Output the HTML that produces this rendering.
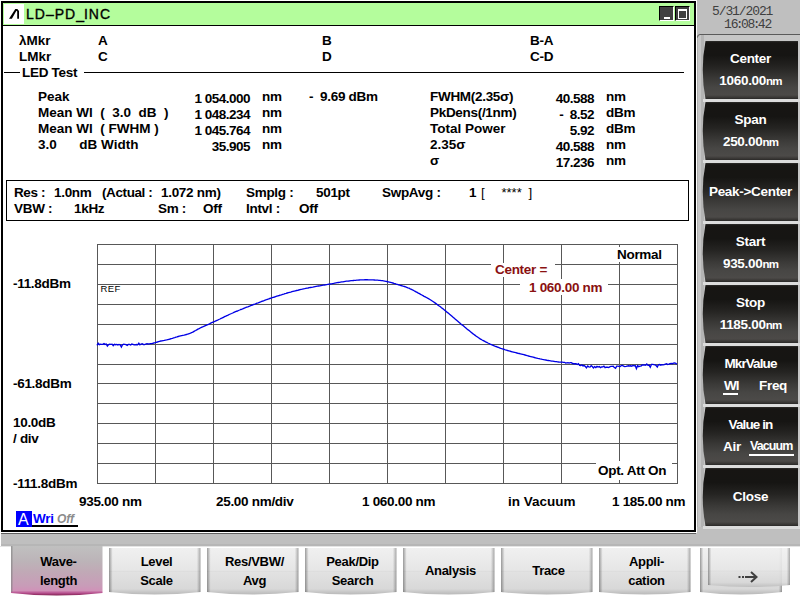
<!DOCTYPE html>
<html><head><meta charset="utf-8">
<style>
*{margin:0;padding:0;box-sizing:border-box}
html,body{width:800px;height:600px;overflow:hidden;background:#fff}
body{position:relative;font-family:"Liberation Sans",sans-serif;font-weight:bold;font-size:13.5px;color:#000}
.a{position:absolute}
.t{position:absolute;white-space:pre;line-height:13px;letter-spacing:-0.3px}
.z{letter-spacing:0}
#win{left:1px;top:1px;width:695px;height:531px;border:2px solid #000;background:#fff}
#title{left:3px;top:3px;width:691px;height:23px;background:#b4fd9c;border-bottom:1px solid #000}
#panel{left:696px;top:0;width:104px;height:547px;background:#bfbfbf}
#strip{left:0;top:532px;width:800px;height:15px;background:#bfbfbf}
.rb{position:absolute;left:703px;width:95px;height:58px;color:#fff;text-align:center;
 background:linear-gradient(#2a2a2a 0%,#151515 12%,#1b1b1b 40%,#444 70%,#5c5b58 82%,#3a3a3a 100%)}
.rb .l{position:absolute;left:0;width:95px;text-align:center;line-height:13px;white-space:pre}
.bb{position:absolute;top:548px;width:92px;height:47px;text-align:center;
 background:linear-gradient(#ececec 0%,#e4e4e4 48%,#d8d8d8 50%,#dcdcdc 90%,#c8c8c8 100%);border-radius:0 0 6px 6px}
.bb .l{position:absolute;left:0;width:92px;text-align:center;line-height:13px;white-space:pre}
.g{position:absolute;background:#505050}
.red{color:#8a1111}
.n{letter-spacing:-0.5px}
.rl{left:703px;width:95px;text-align:center;color:#fff}
.bl{width:92px;text-align:center;font-size:13px}
</style></head><body>
<div id="win" class="a"></div>
<div id="title" class="a"></div>
<div class="a" style="left:4px;top:4px;width:20px;height:20px;background:#fff"></div>
<svg class="a" style="left:0;top:0" width="40" height="30"><path d="M9 18.8 L15.3 9 L17.3 9 L19 11 L19 18.8 L17.2 18.8 L17.2 11.6 L16.4 10.8 L11.9 18.8 Z" fill="#000"/></svg>
<div class="t" style="left:26px;top:7px;font-size:14px;font-weight:normal;line-height:14px;letter-spacing:1.0px;-webkit-text-stroke:0.35px #000">LD–PD<span style="letter-spacing:0">_</span>INC</div>
<!-- min/max -->
<div class="a" style="left:659px;top:6px;width:15px;height:15px;background:#404040;border-top:1px solid #000;border-left:1px solid #000;border-right:1px solid #fff;border-bottom:1px solid #fff"></div>
<div class="a" style="left:664px;top:17px;width:6px;height:2px;background:#fff"></div>
<div class="a" style="left:675px;top:6px;width:15px;height:15px;background:#404040;border-top:1px solid #000;border-left:1px solid #000;border-right:1px solid #fff;border-bottom:1px solid #fff"></div>
<div class="a" style="left:678px;top:9px;width:9px;height:10px;border:solid #fff;border-width:2px 1px 1px 1px"></div>

<!-- marker header -->
<div class="t z" style="left:19px;top:34px">λMkr</div>
<div class="t" style="left:98px;top:34px">A</div>
<div class="t" style="left:322px;top:34px">B</div>
<div class="t" style="left:530px;top:34px">B-A</div>
<div class="t z" style="left:19px;top:50px">LMkr</div>
<div class="t" style="left:98px;top:50px">C</div>
<div class="t" style="left:322px;top:50px">D</div>
<div class="t" style="left:530px;top:50px">C-D</div>
<div class="a" style="left:4px;top:72px;width:16px;height:1px;background:#000"></div>
<div class="t" style="left:22px;top:66px">LED Test</div>
<div class="a" style="left:84px;top:72px;width:600px;height:1px;background:#000"></div>

<!-- results -->
<div class="t z" style="left:38px;top:90px">Peak</div>
<div class="t z" style="left:38px;top:106px">Mean Wl  (  3.0  dB  )</div>
<div class="t z" style="left:38px;top:122px">Mean Wl  ( FWHM )</div>
<div class="t z" style="left:38px;top:138px">3.0      dB Width</div>
<div class="t n" style="left:150px;top:92px;width:100px;text-align:right">1 054.000</div>
<div class="t n" style="left:150px;top:108px;width:100px;text-align:right">1 048.234</div>
<div class="t n" style="left:150px;top:124px;width:100px;text-align:right">1 045.764</div>
<div class="t n" style="left:150px;top:140px;width:100px;text-align:right">35.905</div>
<div class="t" style="left:262px;top:90px">nm</div>
<div class="t" style="left:262px;top:106px">nm</div>
<div class="t" style="left:262px;top:122px">nm</div>
<div class="t" style="left:262px;top:138px">nm</div>
<div class="t" style="left:309px;top:90px">-  9.69 dBm</div>

<div class="t" style="left:430px;top:90px;letter-spacing:-0.3px">FWHM(2.35σ)</div>
<div class="t" style="left:430px;top:106px;letter-spacing:-0.3px">PkDens(/1nm)</div>
<div class="t z" style="left:430px;top:122px">Total Power</div>
<div class="t z" style="left:430px;top:138px">2.35σ</div>
<div class="t z" style="left:430px;top:154px">σ</div>
<div class="t n" style="left:494px;top:92px;width:100px;text-align:right">40.588</div>
<div class="t n" style="left:494px;top:108px;width:100px;text-align:right">-  8.52</div>
<div class="t n" style="left:494px;top:124px;width:100px;text-align:right">5.92</div>
<div class="t n" style="left:494px;top:140px;width:100px;text-align:right">40.588</div>
<div class="t n" style="left:494px;top:156px;width:100px;text-align:right">17.236</div>
<div class="t" style="left:606px;top:90px">nm</div>
<div class="t" style="left:606px;top:106px">dBm</div>
<div class="t" style="left:606px;top:122px">dBm</div>
<div class="t" style="left:606px;top:138px">nm</div>
<div class="t" style="left:606px;top:154px">nm</div>

<!-- info box -->
<div class="a" style="left:6px;top:180px;width:683px;height:41px;border:1px solid #000"></div>
<div class="t" style="left:14px;top:186px;letter-spacing:-0.4px">Res :</div>
<div class="t" style="left:54px;top:186px;letter-spacing:-0.3px">1.0nm</div>
<div class="t" style="left:102px;top:186px;letter-spacing:-0.4px">(Actual :</div>
<div class="t" style="left:161px;top:186px;letter-spacing:-0.3px">1.072 nm)</div>
<div class="t" style="left:246px;top:186px">Smplg :</div>
<div class="t" style="left:316px;top:186px">501pt</div>
<div class="t" style="left:382px;top:186px">SwpAvg :</div>
<div class="t" style="left:469px;top:186px">1</div><div class="t" style="left:481px;top:186px;font-weight:normal">[</div>
<div class="t" style="left:501.5px;top:186px;font-size:13px;font-weight:normal;letter-spacing:0">****</div>
<div class="t" style="left:528.5px;top:186px;font-weight:normal">]</div>
<div class="t" style="left:14px;top:202px;letter-spacing:-0.3px">VBW :</div>
<div class="t" style="left:74px;top:202px">1kHz</div>
<div class="t" style="left:158px;top:202px">Sm :</div>
<div class="t" style="left:203px;top:202px">Off</div>
<div class="t" style="left:246px;top:202px">Intvl :</div>
<div class="t" style="left:299px;top:202px">Off</div>

<!-- graph -->
<div id="grid" class="a" style="left:97px;top:244px;width:581px;height:240px"></div>
<svg class="a" style="left:0;top:0" width="800" height="600" id="gsvg">
<g stroke="#585858" stroke-width="1" shape-rendering="crispEdges"><line x1="97.5" y1="244" x2="97.5" y2="484" /><line x1="155.5" y1="244" x2="155.5" y2="484" /><line x1="213.5" y1="244" x2="213.5" y2="484" /><line x1="271.5" y1="244" x2="271.5" y2="484" /><line x1="329.5" y1="244" x2="329.5" y2="484" /><line x1="387.5" y1="244" x2="387.5" y2="484" /><line x1="445.5" y1="244" x2="445.5" y2="484" /><line x1="503.5" y1="244" x2="503.5" y2="484" /><line x1="561.5" y1="244" x2="561.5" y2="484" /><line x1="619.5" y1="244" x2="619.5" y2="484" /><line x1="677.5" y1="244" x2="677.5" y2="484" /><line x1="97" y1="244.5" x2="678" y2="244.5" /><line x1="97" y1="264.5" x2="678" y2="264.5" /><line x1="97" y1="284.5" x2="678" y2="284.5" /><line x1="97" y1="304.5" x2="678" y2="304.5" /><line x1="97" y1="324.5" x2="678" y2="324.5" /><line x1="97" y1="344.5" x2="678" y2="344.5" /><line x1="97" y1="364.5" x2="678" y2="364.5" /><line x1="97" y1="383.5" x2="678" y2="383.5" /><line x1="97" y1="403.5" x2="678" y2="403.5" /><line x1="97" y1="423.5" x2="678" y2="423.5" /><line x1="97" y1="443.5" x2="678" y2="443.5" /><line x1="97" y1="463.5" x2="678" y2="463.5" /><line x1="97" y1="483.5" x2="678" y2="483.5" /></g>
<path d="M97.0 345.4 L98.2 343.3 L99.3 344.7 L100.5 344.2 L101.6 344.3 L102.8 344.4 L104.0 343.6 L105.1 344.4 L106.3 344.1 L107.4 346.0 L108.6 344.6 L109.8 344.3 L110.9 344.4 L112.1 344.2 L113.2 345.6 L114.4 344.3 L115.6 344.7 L116.7 344.4 L117.9 344.9 L119.0 344.4 L120.2 344.9 L121.4 347.0 L122.5 344.7 L123.7 344.3 L124.8 344.4 L126.0 344.7 L127.2 345.4 L128.3 344.4 L129.5 344.4 L130.6 345.0 L131.8 344.1 L133.0 344.4 L134.1 344.9 L135.3 344.8 L136.4 344.5 L137.6 344.8 L138.8 343.2 L139.9 344.9 L141.1 344.0 L142.2 343.7 L143.4 344.5 L144.6 344.6 L145.7 344.0 L146.9 343.6 L148.0 344.0 L149.2 343.8 L150.4 343.7 L151.5 343.6 L152.7 343.3 L153.8 343.0 L155.0 342.7 L156.2 342.3 L157.3 342.0 L158.5 341.6 L159.6 341.3 L160.8 341.0 L162.0 340.8 L163.1 340.6 L164.3 340.4 L165.4 340.1 L166.6 339.9 L167.8 339.6 L168.9 339.3 L170.1 339.0 L171.2 338.6 L172.4 338.3 L173.6 337.9 L174.7 337.6 L175.9 337.2 L177.0 336.9 L178.2 336.5 L179.4 336.2 L180.5 335.9 L181.7 335.6 L182.8 335.3 L184.0 335.1 L185.2 334.8 L186.3 334.5 L187.5 334.2 L188.6 333.8 L189.8 333.4 L191.0 332.9 L192.1 332.4 L193.3 331.8 L194.4 331.1 L195.6 330.5 L196.8 329.8 L197.9 329.2 L199.1 328.6 L200.2 328.0 L201.4 327.4 L202.6 326.9 L203.7 326.4 L204.9 325.8 L206.0 325.3 L207.2 324.8 L208.4 324.3 L209.5 323.8 L210.7 323.2 L211.8 322.7 L213.0 322.2 L214.2 321.7 L215.3 321.2 L216.5 320.6 L217.6 320.1 L218.8 319.5 L220.0 319.0 L221.1 318.4 L222.3 317.9 L223.4 317.3 L224.6 316.7 L225.8 316.2 L226.9 315.6 L228.1 315.1 L229.2 314.5 L230.4 314.0 L231.6 313.5 L232.7 313.0 L233.9 312.4 L235.0 311.9 L236.2 311.4 L237.4 311.0 L238.5 310.5 L239.7 310.0 L240.8 309.5 L242.0 309.1 L243.2 308.6 L244.3 308.1 L245.5 307.7 L246.6 307.2 L247.8 306.8 L249.0 306.3 L250.1 305.9 L251.3 305.4 L252.4 305.0 L253.6 304.5 L254.8 304.1 L255.9 303.7 L257.1 303.2 L258.2 302.8 L259.4 302.3 L260.6 301.9 L261.7 301.4 L262.9 301.0 L264.0 300.6 L265.2 300.1 L266.4 299.7 L267.5 299.3 L268.7 298.9 L269.8 298.5 L271.0 298.1 L272.2 297.7 L273.3 297.3 L274.5 297.0 L275.6 296.6 L276.8 296.2 L278.0 295.8 L279.1 295.5 L280.3 295.1 L281.4 294.8 L282.6 294.4 L283.8 294.1 L284.9 293.7 L286.1 293.4 L287.2 293.0 L288.4 292.7 L289.6 292.4 L290.7 292.1 L291.9 291.7 L293.0 291.4 L294.2 291.1 L295.4 290.8 L296.5 290.5 L297.7 290.3 L298.8 290.0 L300.0 289.7 L301.2 289.4 L302.3 289.2 L303.5 288.9 L304.6 288.7 L305.8 288.4 L307.0 288.2 L308.1 288.0 L309.3 287.7 L310.4 287.5 L311.6 287.3 L312.8 287.1 L313.9 286.8 L315.1 286.6 L316.2 286.4 L317.4 286.2 L318.6 286.0 L319.7 285.8 L320.9 285.6 L322.0 285.4 L323.2 285.2 L324.4 285.0 L325.5 284.8 L326.7 284.6 L327.8 284.4 L329.0 284.2 L330.2 284.0 L331.3 283.8 L332.5 283.6 L333.6 283.4 L334.8 283.1 L336.0 282.9 L337.1 282.7 L338.3 282.5 L339.4 282.3 L340.6 282.1 L341.8 281.9 L342.9 281.8 L344.1 281.6 L345.2 281.4 L346.4 281.2 L347.6 281.1 L348.7 281.0 L349.9 280.8 L351.0 280.7 L352.2 280.6 L353.4 280.5 L354.5 280.4 L355.7 280.3 L356.8 280.2 L358.0 280.1 L359.2 280.0 L360.3 279.9 L361.5 279.9 L362.6 279.8 L363.8 279.8 L365.0 279.7 L366.1 279.7 L367.3 279.7 L368.4 279.8 L369.6 279.8 L370.8 279.8 L371.9 279.9 L373.1 279.9 L374.2 280.0 L375.4 280.1 L376.6 280.1 L377.7 280.2 L378.9 280.3 L380.0 280.4 L381.2 280.6 L382.4 280.7 L383.5 280.9 L384.7 281.1 L385.8 281.3 L387.0 281.5 L388.2 281.8 L389.3 282.1 L390.5 282.4 L391.6 282.7 L392.8 283.0 L394.0 283.4 L395.1 283.7 L396.3 284.1 L397.4 284.4 L398.6 284.8 L399.8 285.2 L400.9 285.5 L402.1 285.8 L403.2 286.2 L404.4 286.5 L405.6 286.9 L406.7 287.3 L407.9 287.8 L409.0 288.2 L410.2 288.8 L411.4 289.3 L412.5 289.9 L413.7 290.5 L414.8 291.2 L416.0 291.8 L417.2 292.4 L418.3 293.1 L419.5 293.7 L420.6 294.4 L421.8 295.0 L423.0 295.6 L424.1 296.3 L425.3 296.9 L426.4 297.5 L427.6 298.2 L428.8 298.8 L429.9 299.5 L431.1 300.3 L432.2 301.0 L433.4 301.8 L434.6 302.6 L435.7 303.4 L436.9 304.3 L438.0 305.1 L439.2 306.0 L440.4 306.8 L441.5 307.7 L442.7 308.6 L443.8 309.5 L445.0 310.4 L446.2 311.4 L447.3 312.4 L448.5 313.3 L449.6 314.3 L450.8 315.3 L452.0 316.3 L453.1 317.3 L454.3 318.3 L455.4 319.3 L456.6 320.3 L457.8 321.3 L458.9 322.2 L460.1 323.2 L461.2 324.2 L462.4 325.1 L463.6 326.1 L464.7 327.0 L465.9 327.9 L467.0 328.9 L468.2 329.9 L469.4 330.8 L470.5 331.7 L471.7 332.7 L472.8 333.6 L474.0 334.5 L475.2 335.4 L476.3 336.2 L477.5 337.0 L478.6 337.8 L479.8 338.6 L481.0 339.3 L482.1 340.0 L483.3 340.6 L484.4 341.2 L485.6 341.9 L486.8 342.4 L487.9 343.0 L489.1 343.5 L490.2 344.1 L491.4 344.6 L492.6 345.1 L493.7 345.6 L494.9 346.1 L496.0 346.5 L497.2 347.0 L498.4 347.4 L499.5 347.8 L500.7 348.3 L501.8 348.7 L503.0 349.0 L504.2 349.4 L505.3 349.8 L506.5 350.1 L507.6 350.5 L508.8 350.8 L510.0 351.1 L511.1 351.5 L512.3 351.8 L513.4 352.1 L514.6 352.4 L515.8 352.7 L516.9 353.0 L518.1 353.3 L519.2 353.5 L520.4 353.8 L521.6 354.1 L522.7 354.4 L523.9 354.7 L525.0 355.0 L526.2 355.3 L527.4 355.7 L528.5 356.0 L529.7 356.3 L530.8 356.6 L532.0 356.9 L533.2 357.2 L534.3 357.5 L535.5 357.8 L536.6 358.1 L537.8 358.4 L539.0 358.6 L540.1 358.9 L541.3 359.1 L542.4 359.4 L543.6 359.6 L544.8 359.8 L545.9 360.0 L547.1 360.3 L548.2 360.5 L549.4 360.7 L550.6 360.9 L551.7 361.1 L552.9 361.2 L554.0 361.4 L555.2 361.6 L556.4 361.7 L557.5 361.8 L558.7 362.0 L559.8 362.1 L561.0 362.1 L562.2 362.2 L563.3 362.3 L564.5 362.3 L565.6 363.0 L566.8 362.8 L568.0 362.6 L569.1 363.1 L570.3 362.7 L571.4 362.6 L572.6 363.5 L573.8 363.7 L574.9 363.7 L576.1 363.7 L577.2 364.5 L578.4 363.6 L579.6 365.3 L580.7 365.5 L581.9 364.8 L583.0 365.9 L584.2 365.6 L585.4 366.5 L586.5 367.9 L587.7 366.0 L588.8 366.8 L590.0 367.1 L591.2 365.7 L592.3 366.5 L593.5 367.9 L594.6 366.6 L595.8 367.6 L597.0 366.4 L598.1 367.1 L599.3 366.5 L600.4 367.6 L601.6 367.0 L602.8 366.8 L603.9 366.2 L605.1 367.7 L606.2 367.2 L607.4 367.2 L608.6 367.6 L609.7 366.9 L610.9 366.4 L612.0 366.3 L613.2 366.2 L614.4 367.6 L615.5 368.3 L616.7 366.1 L617.8 366.2 L619.0 366.4 L620.2 366.5 L621.3 365.6 L622.5 365.4 L623.6 366.1 L624.8 366.6 L626.0 366.4 L627.1 366.1 L628.3 365.8 L629.4 366.0 L630.6 365.8 L631.8 366.2 L632.9 365.4 L634.1 365.8 L635.2 365.6 L636.4 368.6 L637.6 365.7 L638.7 366.6 L639.9 366.1 L641.0 366.0 L642.2 364.9 L643.4 365.0 L644.5 364.9 L645.7 365.3 L646.8 364.0 L648.0 365.4 L649.2 365.3 L650.3 367.2 L651.5 364.3 L652.6 364.3 L653.8 364.7 L655.0 364.9 L656.1 365.5 L657.3 367.0 L658.4 364.8 L659.6 364.5 L660.8 365.2 L661.9 364.7 L663.1 364.9 L664.2 364.7 L665.4 364.1 L666.6 363.7 L667.7 364.6 L668.9 364.2 L670.0 363.6 L671.2 363.4 L672.4 363.7 L673.5 363.2 L674.7 362.9 L675.8 363.4 L677.0 364.2" fill="none" stroke="#0000e6" stroke-width="1.35"/>
<rect x="491" y="263" width="64" height="14" fill="#fff"/><rect x="520" y="279" width="88" height="16" fill="#fff"/><rect x="612" y="247" width="60" height="15" fill="#fff"/><rect x="596" y="461" width="76" height="19" fill="#fff"/></svg>

<div class="t red" style="left:495px;top:263px">Center =</div>
<div class="t red" style="left:529px;top:281px">1 060.00 nm</div>
<div class="t" style="left:617px;top:248px">Normal</div>
<div class="t" style="left:598px;top:464px">Opt. Att On</div>
<div class="t" style="left:13px;top:277px">-11.8dBm</div>
<div class="t" style="left:13px;top:377px">-61.8dBm</div>
<div class="t" style="left:13px;top:416px">10.0dB</div>
<div class="t" style="left:13px;top:432px">/ div</div>
<div class="t" style="left:13px;top:477px">-111.8dBm</div>
<div class="t" style="left:100.5px;top:283.6px;font-size:9.5px;font-weight:normal;line-height:10px;letter-spacing:0.4px">REF</div>

<div class="t" style="left:79px;top:495px">935.00 nm</div>
<div class="t" style="left:216px;top:495px">25.00 nm/div</div>
<div class="t" style="left:362px;top:495px">1 060.00 nm</div>
<div class="t" style="left:508px;top:495px;letter-spacing:0">in Vacuum</div>
<div class="t" style="left:612px;top:495px">1 185.00 nm</div>

<!-- A Wri Off -->
<div class="a" style="left:16px;top:511px;width:16px;height:16px;background:#0000ff"></div>
<div class="t" style="left:18px;top:512px;color:#fff;font-weight:normal;font-size:16px;line-height:16px">A</div>
<div class="t" style="left:33px;top:512px;color:#0000ff">Wri</div>
<div class="t" style="left:57px;top:513px;color:#8c8c8c;font-style:italic;font-weight:bold;font-size:12px;letter-spacing:0">Off</div>
<div class="a" style="left:32px;top:525px;width:46px;height:2px;background:#000"></div>

<!-- right panel -->
<svg class="a" style="left:0;top:0" width="800" height="600">
<defs>
<linearGradient id="rg" x1="0" y1="0" x2="0" y2="1">
<stop offset="0" stop-color="#2e2d2b"/><stop offset="0.03" stop-color="#171513"/><stop offset="0.25" stop-color="#161513"/>
<stop offset="0.45" stop-color="#252422"/><stop offset="0.65" stop-color="#3a3937"/><stop offset="0.8" stop-color="#474644"/>
<stop offset="0.93" stop-color="#4c4a48"/><stop offset="0.975" stop-color="#383634"/><stop offset="1" stop-color="#2a2928"/>
</linearGradient>
<linearGradient id="bg" x1="0" y1="0" x2="0" y2="1">
<stop offset="0" stop-color="#f0f0f0"/><stop offset="0.48" stop-color="#e6e6e6"/><stop offset="0.5" stop-color="#dcdcdc"/>
<stop offset="0.52" stop-color="#e2e2e2"/><stop offset="0.88" stop-color="#d8d8d8"/><stop offset="1" stop-color="#b8b8b8"/>
</linearGradient>
<linearGradient id="bg2" x1="0" y1="0" x2="0" y2="1">
<stop offset="0" stop-color="#f0f0f0"/><stop offset="0.57" stop-color="#e6e6e6"/><stop offset="0.59" stop-color="#dcdcdc"/>
<stop offset="0.61" stop-color="#e2e2e2"/><stop offset="0.88" stop-color="#d8d8d8"/><stop offset="1" stop-color="#bcbcbc"/>
</linearGradient>
<linearGradient id="bgx" x1="0" y1="0" x2="1" y2="0">
<stop offset="0" stop-color="#000" stop-opacity="0.35"/><stop offset="0.04" stop-color="#000" stop-opacity="0"/>
<stop offset="0.96" stop-color="#000" stop-opacity="0"/><stop offset="1" stop-color="#000" stop-opacity="0.3"/>
</linearGradient>
<linearGradient id="pg" x1="0" y1="0" x2="0" y2="1">
<stop offset="0" stop-color="#c0c0c0"/><stop offset="0.3" stop-color="#bcb4b8"/><stop offset="0.5" stop-color="#c0aab6"/>
<stop offset="0.8" stop-color="#c89cb8"/><stop offset="0.9" stop-color="#d092b8"/><stop offset="0.95" stop-color="#b85090"/><stop offset="1" stop-color="#802050"/>
</linearGradient>
</defs>
<rect x="696" y="0" width="104" height="546" fill="#bfbfbf"/><rect x="1" y="532" width="696" height="1" fill="#fff"/>
<rect x="1" y="533" width="799" height="13" fill="#bfbfbf"/><rect x="1" y="533" width="695" height="1" fill="#606060"/>
<rect x="1" y="544" width="799" height="2" fill="#b6b6b6"/><rect x="0" y="546" width="800" height="1" fill="#e4e4e4"/>
<rect x="696" y="0" width="1" height="532" fill="#fff"/>
<rect x="697" y="35" width="103" height="492" fill="#c6c6c6"/>
<rect x="697" y="35" width="1" height="492" fill="#b0b0b0"/>
<rect x="701" y="35" width="3" height="492" fill="#b4b4b4"/>
<path d="M697.5 37.5 Q697.5 34.5 700 34.5 L800 34.5" fill="none" stroke="#5a5a5a" stroke-width="1"/>
<rect x="703" y="99" width="97" height="3" fill="#dcdcdc"/>
<path d="M705.5 41 L798 41 L798 99 L705.5 99 Q700 70 705.5 41 Z" fill="url(#rg)"/>
<rect x="703" y="160" width="97" height="3" fill="#dcdcdc"/>
<path d="M705.5 102 L798 102 L798 160 L705.5 160 Q700 131 705.5 102 Z" fill="url(#rg)"/>
<rect x="703" y="221" width="97" height="3" fill="#dcdcdc"/>
<path d="M705.5 163 L798 163 L798 221 L705.5 221 Q700 192 705.5 163 Z" fill="url(#rg)"/>
<rect x="703" y="282" width="97" height="3" fill="#dcdcdc"/>
<path d="M705.5 224 L798 224 L798 282 L705.5 282 Q700 253 705.5 224 Z" fill="url(#rg)"/>
<rect x="703" y="343" width="97" height="3" fill="#dcdcdc"/>
<path d="M705.5 285 L798 285 L798 343 L705.5 343 Q700 314 705.5 285 Z" fill="url(#rg)"/>
<rect x="703" y="404" width="97" height="3" fill="#dcdcdc"/>
<path d="M705.5 346 L798 346 L798 404 L705.5 404 Q700 375 705.5 346 Z" fill="url(#rg)"/>
<rect x="703" y="465" width="97" height="3" fill="#dcdcdc"/>
<path d="M705.5 407 L798 407 L798 465 L705.5 465 Q700 436 705.5 407 Z" fill="url(#rg)"/>
<rect x="703" y="526" width="97" height="3" fill="#dcdcdc"/>
<path d="M705.5 468 L798 468 L798 526 L705.5 526 Q700 497 705.5 468 Z" fill="url(#rg)"/>
</svg>
<div class="t" style="left:712px;top:5px;font-family:'Liberation Mono',monospace;font-weight:normal;color:#404040;font-size:13px;letter-spacing:-1.1px">5/31/2021</div>
<div class="t" style="left:724px;top:18px;font-family:'Liberation Mono',monospace;font-weight:normal;color:#404040;font-size:13px;letter-spacing:-1.1px">16<span style="margin:0 -1.6px">:</span>08<span style="margin:0 -1.6px">:</span>42</div>
<div class="t rl" style="top:52px">Center</div>
<div class="t rl" style="top:74px">1060.00<span style="font-size:11.5px;letter-spacing:-0.8px">nm</span></div>
<div class="t rl" style="top:113px">Span</div>
<div class="t rl" style="top:135px">250.00<span style="font-size:11.5px;letter-spacing:-0.8px">nm</span></div>
<div class="t rl" style="top:185px">Peak-&gt;Center</div>
<div class="t rl" style="top:235px">Start</div>
<div class="t rl" style="top:257px">935.00<span style="font-size:11.5px;letter-spacing:-0.8px">nm</span></div>
<div class="t rl" style="top:296px">Stop</div>
<div class="t rl" style="top:318px">1185.00<span style="font-size:11.5px;letter-spacing:-0.8px">nm</span></div>
<div class="t rl" style="top:357px;letter-spacing:-0.9px">MkrValue</div>
<div class="t" style="left:724px;top:379px;color:#fff;letter-spacing:-1px">Wl</div>
<div class="a" style="left:723px;top:393px;width:15px;height:2px;background:#fff"></div>
<div class="t" style="left:759px;top:379px;color:#fff">Freq</div>
<div class="t rl" style="top:418px;letter-spacing:-0.9px">Value in</div>
<div class="t" style="left:723px;top:440px;color:#fff">Air</div>
<div class="t" style="left:750px;top:440px;color:#fff;font-size:12.5px;letter-spacing:-0.9px">Vacuum</div>
<div class="a" style="left:749px;top:454px;width:45px;height:2px;background:#fff"></div>
<div class="t rl" style="top:490px">Close</div>
<svg class="a" style="left:0;top:0" width="800" height="600">
<path d="M11 546 L102.5 546 L102.5 593 Q56.75 598 11 593 Z" fill="url(#pg)"/>
<rect x="11" y="546" width="1.5" height="46" fill="#808080" opacity="0.6"/>
<path d="M109 548 L200.5 548 L200.5 592 Q154.75 597 109 592 Z" fill="url(#bg)"/>
<path d="M109 548 L200.5 548 L200.5 592 Q154.75 597 109 592 Z" fill="url(#bgx)"/>
<path d="M207 548 L298.5 548 L298.5 592 Q252.75 597 207 592 Z" fill="url(#bg)"/>
<path d="M207 548 L298.5 548 L298.5 592 Q252.75 597 207 592 Z" fill="url(#bgx)"/>
<path d="M305 548 L396.5 548 L396.5 592 Q350.75 597 305 592 Z" fill="url(#bg)"/>
<path d="M305 548 L396.5 548 L396.5 592 Q350.75 597 305 592 Z" fill="url(#bgx)"/>
<path d="M403 548 L494.5 548 L494.5 592 Q448.75 597 403 592 Z" fill="url(#bg)"/>
<path d="M403 548 L494.5 548 L494.5 592 Q448.75 597 403 592 Z" fill="url(#bgx)"/>
<path d="M501 548 L592.5 548 L592.5 592 Q546.75 597 501 592 Z" fill="url(#bg)"/>
<path d="M501 548 L592.5 548 L592.5 592 Q546.75 597 501 592 Z" fill="url(#bgx)"/>
<path d="M599 548 L690.5 548 L690.5 592 Q644.75 597 599 592 Z" fill="url(#bg)"/>
<path d="M599 548 L690.5 548 L690.5 592 Q644.75 597 599 592 Z" fill="url(#bgx)"/>
<path d="M700 548 L782 548 L782 592 Q741 597 700 592 Z" fill="url(#bg)"/>
<path d="M700 548 L782 548 L782 592 Q741 597 700 592 Z" fill="url(#bgx)"/>
<path d="M708 548 L790 548 L790 585 Q749 589 708 585 Z" fill="url(#bg2)" opacity="0.9"/>
<path d="M708 548 L790 548 L790 585 Q749 589 708 585 Z" fill="url(#bgx)"/>
</svg>
<div class="t bl" style="left:12.5px;top:555px">Wave-</div>
<div class="t bl" style="left:12.5px;top:574px">length</div>
<div class="t bl" style="left:110.5px;top:555px">Level</div>
<div class="t bl" style="left:110.5px;top:574px">Scale</div>
<div class="t bl" style="left:208.5px;top:555px">Res/VBW/</div>
<div class="t bl" style="left:208.5px;top:574px">Avg</div>
<div class="t bl" style="left:306.5px;top:555px">Peak/Dip</div>
<div class="t bl" style="left:306.5px;top:574px">Search</div>
<div class="t bl" style="left:404.5px;top:564px">Analysis</div>
<div class="t bl" style="left:502.5px;top:564px">Trace</div>
<div class="t bl" style="left:600.5px;top:555px">Appli-</div>
<div class="t bl" style="left:600.5px;top:574px">cation</div>
<svg class="a" style="left:0;top:0" width="800" height="600"><g fill="#404040"><rect x="738.5" y="576" width="2" height="2"/><rect x="742" y="576" width="2" height="2"/></g><path d="M745 577 L756 577 M751 572 L756.5 577 L751 582" fill="none" stroke="#404040" stroke-width="2"/></svg>
</body></html>
